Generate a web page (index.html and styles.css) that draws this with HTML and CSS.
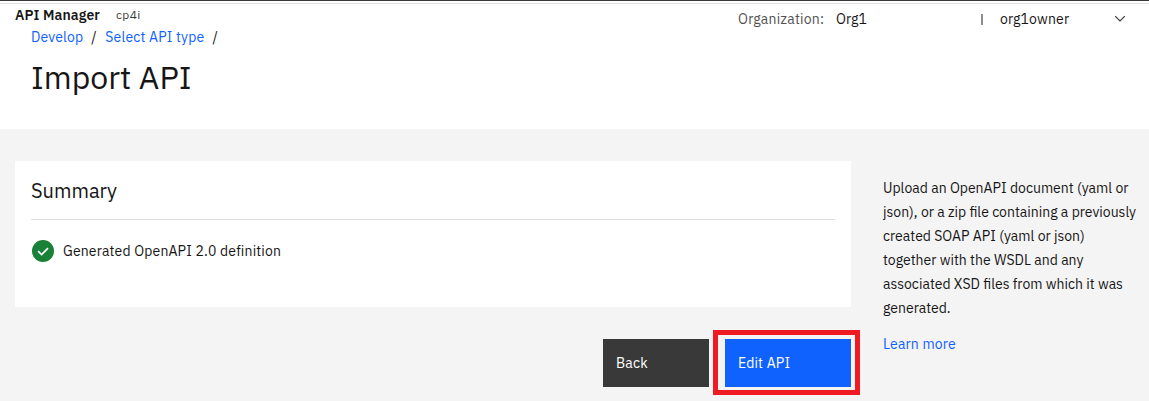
FILE: index.html
```html
<!DOCTYPE html>
<html lang="en">
<head>
<meta charset="utf-8">
<title>Import API</title>
<link rel="stylesheet" href="styles.css">
</head>
<body>
<header class="page-header">
  <div class="header-left">
    <div class="brand"><strong class="brand-name">API Manager</strong><span class="brand-env">cp4i</span></div>
    <nav class="breadcrumb"><a class="link" href="#">Develop</a><span class="slash">/</span><a class="link" href="#">Select API type</a><span class="slash">/</span></nav>
    <h1 class="title">Import API</h1>
  </div>
  <div class="account">
    <span class="org-label">Organization:</span>
    <span class="org-name">Org1</span>
    <span class="divider"></span>
    <span class="user">org1owner</span>
    <svg class="chevron" viewBox="0 0 12 8" fill="none" stroke="#393939" stroke-width="1.2"><path d="M1.2 1.2 6 6l4.8-4.8"/></svg>
  </div>
</header>
<main class="content">
  <div class="main-column">
    <section class="card">
      <h2 class="card-title">Summary</h2>
      <div class="status">
        <svg class="check" viewBox="0 0 22 22"><circle cx="11" cy="11" r="11" fill="#198038"/><path d="m6.1 11.1 3.5 3.5 6.4-6.4" fill="none" stroke="#fff" stroke-width="1.7"/></svg>
        <span class="status-text">Generated OpenAPI 2.0 definition</span>
      </div>
    </section>
    <div class="actions">
      <button class="button back">Back</button>
      <div class="highlight"><button class="button edit">Edit API</button></div>
    </div>
  </div>
  <aside class="help">
    <p class="help-text">Upload an OpenAPI document (yaml or json), or a zip file containing a previously created SOAP API (yaml or json) together with the WSDL and any associated XSD files from which it was generated.</p>
    <a class="link" href="#">Learn more</a>
  </aside>
</main>
</body>
</html>
```
FILE: styles.css
```css
* { box-sizing: border-box; }
body {
  margin: 0;
  height: 401px;
  overflow: hidden;
  background: #f4f4f4;
  color: #161616;
  font: 14px/18px "IBM Plex Sans", Roboto, sans-serif;
  letter-spacing: 0.16px;
}
.link { color: #0f62fe; text-decoration: none; }
.page-header {
  display: flex;
  justify-content: space-between;
  height: 129px;
  background: #fff;
  border-top: 1px solid #393939;
  box-shadow: inset 0 2px #fff, inset 0 3px #e0e0e0;
}
.header-left { padding: 5px 0 0 15px; }
.brand { display: flex; height: 18px; }
.brand-name { font-weight: 600; width: 101px; letter-spacing: 0.1px; }
.brand-env { font-size: 12px; letter-spacing: 0.32px; color: #393939; }
.breadcrumb { display: flex; gap: 8px; padding-left: 16px; margin-top: 4px; }
.slash { width: 6px; }
.title { margin: 11px 0 0 16px; font-size: 32px; line-height: 40px; font-weight: 400; letter-spacing: 0; }
.account { display: flex; align-items: center; height: 36px; width: 411px; white-space: nowrap; }
.org-label { width: 98px; color: #525252; letter-spacing: 0.24px; }
.org-name { width: 145px; }
.divider { width: 2px; height: 11px; background: #8d8d8d; margin-right: 17px; }
.user { width: 114px; }
.chevron { width: 12px; height: 8px; }
.content { display: flex; gap: 32px; padding: 32px 0 0 15px; }
.main-column { width: 836px; }
.card { height: 146px; padding: 16px; background: #fff; }
.card-title { margin: 0; height: 43px; font-size: 20px; line-height: 28px; font-weight: 400; letter-spacing: 0; border-bottom: 1px solid #e0e0e0; }
.status { display: flex; align-items: center; gap: 9px; margin-top: 20px; padding-left: 1px; height: 22px; }
.check { width: 22px; height: 22px; }
.actions { display: flex; justify-content: flex-end; align-items: center; gap: 4px; margin: 23px -9px 0 0; }
.button { display: block; height: 48px; padding: 0 13px; border: 0; border-radius: 0; color: #fff; font: inherit; letter-spacing: inherit; text-align: left; }
.back { width: 106px; background: #393939; }
.edit { width: 126px; background: #0f62fe; }
.highlight { width: 147px; height: 65px; padding: 4px 0 0 7px; border: 5px solid #ef1a22; }
.help { padding-top: 15px; width: 257px; }
.help-text { margin: 0 0 15px; line-height: 24px; letter-spacing: 0; }
```
